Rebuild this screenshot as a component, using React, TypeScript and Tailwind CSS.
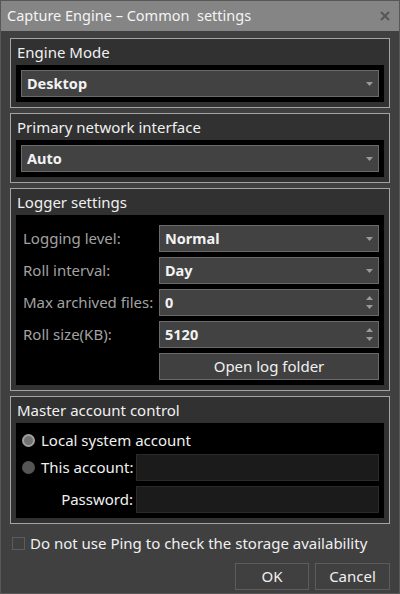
import React from "react";

function Arrow() {
  return (
    <svg width="7" height="4" viewBox="0 0 7 4" className="shrink-0">
      <path d="M0 0H7L3.5 4Z" fill="#9a9a9a" />
    </svg>
  );
}

function Spin() {
  return (
    <div className="flex flex-col gap-[5px] shrink-0">
      <svg width="7" height="4" viewBox="0 0 7 4">
        <path d="M0 4H7L3.5 0Z" fill="#9a9a9a" />
      </svg>
      <svg width="7" height="4" viewBox="0 0 7 4">
        <path d="M0 0H7L3.5 4Z" fill="#9a9a9a" />
      </svg>
    </div>
  );
}

function Select({ value, spin }: { value: string; spin?: boolean }) {
  return (
    <div className="h-[27px] flex-1 flex items-center justify-between bg-[#424242] border border-[#6a6a6a] pl-[5px] pr-[5px]">
      <span className="font-bold text-[14.5px] text-[#f2f2f2]">{value}</span>
      {spin ? <Spin /> : <Arrow />}
    </div>
  );
}

function Group({
  title,
  children,
  panelClass,
}: {
  title: string;
  children: React.ReactNode;
  panelClass: string;
}) {
  return (
    <div className="border border-[#a3a3a3] bg-[#313131] px-[5px] pb-[5px]">
      <div className="h-[26px] flex items-center px-[1px] text-[15px] text-[#f0f0f0]">
        {title}
      </div>
      <div className={"bg-black " + panelClass}>{children}</div>
    </div>
  );
}

function Row({ label, children }: { label: string; children: React.ReactNode }) {
  return (
    <div className="flex items-center h-[27px]">
      <span className="w-[136px] shrink-0 text-[15px] text-[#a2a2a2]">{label}</span>
      {children}
    </div>
  );
}

export default function App() {
  return (
    <div className="w-[400px] h-[594px] bg-[#404040] border border-[#575757] flex flex-col font-['Noto_Sans',sans-serif] select-none">
      {/* title bar */}
      <div className="h-[30px] bg-[#858585] flex items-center justify-between pl-[6px] pr-[9px] shrink-0">
        <span className="text-[14.5px] text-[#f4f4f4] whitespace-pre">
          Capture Engine – Common  settings
        </span>
        <svg width="10" height="10" viewBox="0 0 10 10">
          <path d="M1 1L9 9M9 1L1 9" stroke="#565656" strokeWidth="2" />
        </svg>
      </div>

      <div className="flex flex-col px-[9px] pt-[7px] gap-[5px]">
        <Group title="Engine Mode" panelClass="p-[5px] flex">
          <Select value="Desktop" />
        </Group>

        <Group title="Primary network interface" panelClass="p-[5px] flex">
          <Select value="Auto" />
        </Group>

        <Group title="Logger settings" panelClass="pt-[10px] pb-[5px] pl-[7px] pr-[5px] flex flex-col gap-[5px]">
          <Row label="Logging level:">
            <Select value="Normal" />
          </Row>
          <Row label="Roll interval:">
            <Select value="Day" />
          </Row>
          <Row label="Max archived files:">
            <Select value="0" spin />
          </Row>
          <Row label="Roll size(KB):">
            <Select value="5120" spin />
          </Row>
          <div className="flex h-[27px]">
            <span className="w-[136px] shrink-0" />
            <div className="flex-1 flex items-center justify-center bg-[#404040] border border-[#6a6a6a] text-[15px] text-[#f0f0f0]">
              Open log folder
            </div>
          </div>
        </Group>

        <Group title="Master account control" panelClass="pt-[3px] pb-[5px] pl-[6px] pr-[5px] flex flex-col">
          <div className="h-[28px] flex items-center gap-[6px]">
            <span className="w-[13px] h-[13px] rounded-full bg-[#727272] border-2 border-[#a0a0a0]" />
            <span className="text-[15px] text-[#f0f0f0]">Local system account</span>
          </div>
          <div className="flex items-center h-[27px]">
            <div className="w-[114px] shrink-0 flex items-center gap-[6px]">
              <span className="w-[13px] h-[13px] rounded-full bg-[#555555]" />
              <span className="text-[15px] text-[#f0f0f0]">This account:</span>
            </div>
            <div className="flex-1 h-full bg-[#1b1b1b] border border-[#2a2a2a]" />
          </div>
          <div className="flex items-center h-[27px] mt-[5px]">
            <span className="w-[114px] shrink-0 text-right pr-[3px] text-[15px] text-[#f0f0f0]">
              Password:
            </span>
            <div className="flex-1 h-full bg-[#1b1b1b] border border-[#2a2a2a]" />
          </div>
        </Group>

        <div className="h-[20px] mt-[4px] flex items-center gap-[5px] pl-[2px]">
          <span className="w-[13px] h-[13px] border border-[#5c5c5c]" />
          <span className="text-[15px] text-[#f0f0f0]">
            Do not use Ping to check the storage availability
          </span>
        </div>

        <div className="flex justify-end gap-[6px] mt-[5px]">
          <div className="w-[74px] h-[27px] flex items-center justify-center border border-[#5c5c5c] text-[15px] text-[#f0f0f0]">
            OK
          </div>
          <div className="w-[75px] h-[27px] flex items-center justify-center border border-[#5c5c5c] text-[15px] text-[#f0f0f0]">
            Cancel
          </div>
        </div>
      </div>
    </div>
  );
}
